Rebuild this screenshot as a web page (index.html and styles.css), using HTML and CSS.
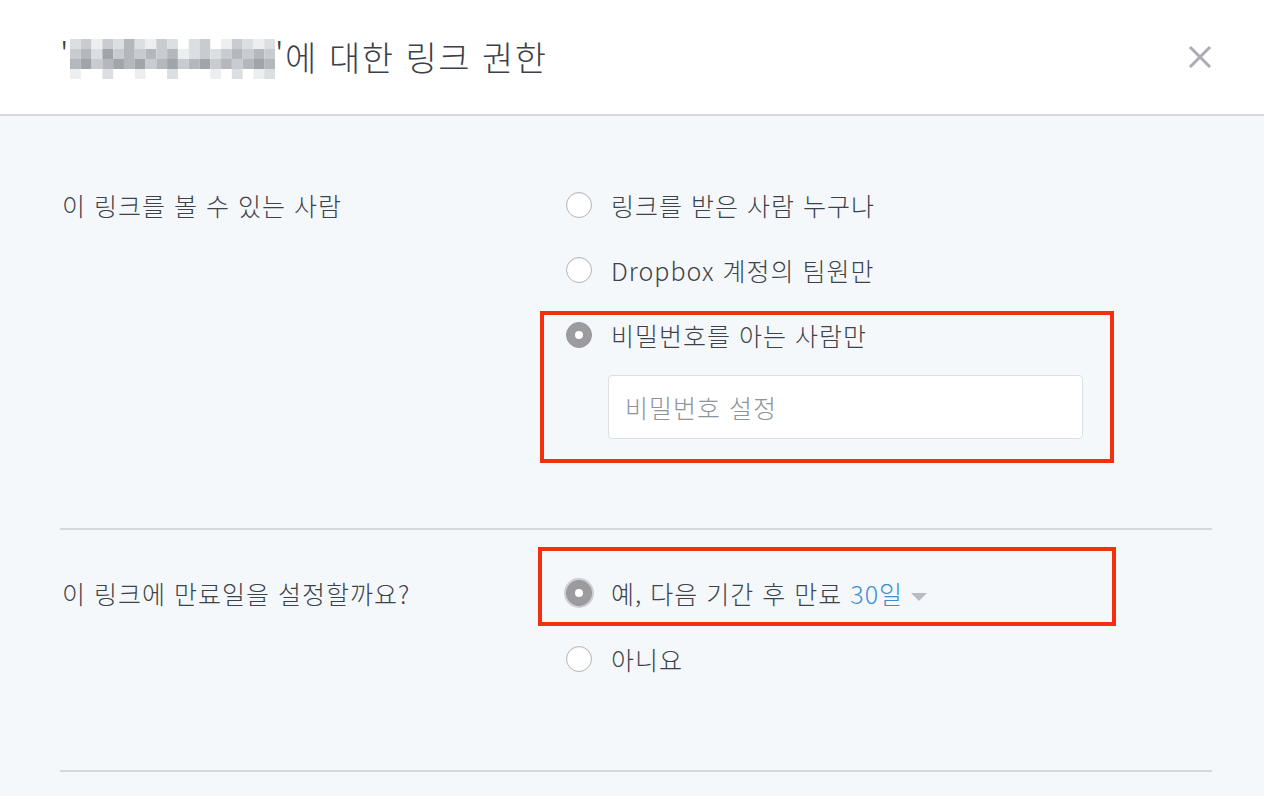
FILE: index.html
```html
<!DOCTYPE html>
<html lang="ko">
<head>
<meta charset="utf-8">
<title>링크 권한</title>
<link rel="stylesheet" href="styles.css">
</head>
<body>
<div class="modal">
  <header class="header">
    <h1 class="title">
      <span class="q">'</span><svg class="mosaic" width="205" height="40" viewBox="0 0 209 40" preserveAspectRatio="none" aria-hidden="true">
        <g>
          <rect x="0" y="0" width="11" height="10" fill="#dcdfe2"/><rect x="11" y="0" width="11" height="10" fill="#c8ccd0"/><rect x="22" y="0" width="11" height="10" fill="#eceef0"/><rect x="33" y="0" width="11" height="10" fill="#c8ccd0"/><rect x="44" y="0" width="11" height="10" fill="#dcdfe2"/><rect x="55" y="0" width="11" height="10" fill="#b4b8bd"/><rect x="66" y="0" width="11" height="10" fill="#dcdfe2"/><rect x="77" y="0" width="11" height="10" fill="#eceef0"/><rect x="88" y="0" width="11" height="10" fill="#c8ccd0"/><rect x="99" y="0" width="11" height="10" fill="#dcdfe2"/><rect x="121" y="0" width="11" height="10" fill="#dcdfe2"/><rect x="132" y="0" width="11" height="10" fill="#c8ccd0"/><rect x="154" y="0" width="11" height="10" fill="#eceef0"/><rect x="165" y="0" width="11" height="10" fill="#c8ccd0"/><rect x="176" y="0" width="11" height="10" fill="#dcdfe2"/><rect x="187" y="0" width="11" height="10" fill="#eceef0"/><rect x="198" y="0" width="11" height="10" fill="#dcdfe2"/>
        </g>
        <g>
          <rect x="0" y="10" width="11" height="10" fill="#c8ccd0"/><rect x="11" y="10" width="11" height="10" fill="#b4b8bd"/><rect x="22" y="10" width="11" height="10" fill="#dcdfe2"/><rect x="33" y="10" width="11" height="10" fill="#a0a5aa"/><rect x="44" y="10" width="11" height="10" fill="#c8ccd0"/><rect x="55" y="10" width="11" height="10" fill="#b4b8bd"/><rect x="66" y="10" width="11" height="10" fill="#c8ccd0"/><rect x="77" y="10" width="11" height="10" fill="#b4b8bd"/><rect x="88" y="10" width="11" height="10" fill="#c8ccd0"/><rect x="99" y="10" width="11" height="10" fill="#b4b8bd"/><rect x="110" y="10" width="11" height="10" fill="#eceef0"/><rect x="121" y="10" width="11" height="10" fill="#dcdfe2"/><rect x="132" y="10" width="11" height="10" fill="#c8ccd0"/><rect x="143" y="10" width="11" height="10" fill="#dcdfe2"/><rect x="154" y="10" width="11" height="10" fill="#c8ccd0"/><rect x="165" y="10" width="11" height="10" fill="#b4b8bd"/><rect x="176" y="10" width="11" height="10" fill="#c8ccd0"/><rect x="187" y="10" width="11" height="10" fill="#b4b8bd"/><rect x="198" y="10" width="11" height="10" fill="#c8ccd0"/>
        </g>
        <g>
          <rect x="0" y="20" width="11" height="10" fill="#b4b8bd"/><rect x="11" y="20" width="11" height="10" fill="#a0a5aa"/><rect x="22" y="20" width="11" height="10" fill="#c8ccd0"/><rect x="33" y="20" width="11" height="10" fill="#b4b8bd"/><rect x="44" y="20" width="11" height="10" fill="#a0a5aa"/><rect x="55" y="20" width="11" height="10" fill="#b4b8bd"/><rect x="66" y="20" width="11" height="10" fill="#a0a5aa"/><rect x="77" y="20" width="11" height="10" fill="#c8ccd0"/><rect x="88" y="20" width="11" height="10" fill="#b4b8bd"/><rect x="99" y="20" width="11" height="10" fill="#a0a5aa"/><rect x="110" y="20" width="11" height="10" fill="#c8ccd0"/><rect x="121" y="20" width="11" height="10" fill="#b4b8bd"/><rect x="132" y="20" width="11" height="10" fill="#a0a5aa"/><rect x="143" y="20" width="11" height="10" fill="#c8ccd0"/><rect x="154" y="20" width="11" height="10" fill="#b4b8bd"/><rect x="165" y="20" width="11" height="10" fill="#c8ccd0"/><rect x="176" y="20" width="11" height="10" fill="#b4b8bd"/><rect x="187" y="20" width="11" height="10" fill="#a0a5aa"/><rect x="198" y="20" width="11" height="10" fill="#b4b8bd"/>
        </g>
        <g>
          <rect x="0" y="30" width="11" height="10" fill="#eceef0"/><rect x="33" y="30" width="11" height="10" fill="#dcdfe2"/><rect x="66" y="30" width="11" height="10" fill="#eceef0"/><rect x="99" y="30" width="11" height="10" fill="#dcdfe2"/><rect x="143" y="30" width="11" height="10" fill="#eceef0"/><rect x="165" y="30" width="11" height="10" fill="#dcdfe2"/><rect x="187" y="30" width="11" height="10" fill="#eceef0"/><rect x="198" y="30" width="11" height="10" fill="#dcdfe2"/>
        </g>
      </svg><span class="q">'</span>에 대한 링크 권한
    </h1>
    <button class="close" type="button" aria-label="닫기">
      <svg width="24" height="24" viewBox="0 0 24 24"><path d="M2 2 L22 22 M22 2 L2 22" stroke="#a9adb3" stroke-width="3" fill="none"/></svg>
    </button>
  </header>

  <section class="section first">
    <div class="label">이 링크를 볼 수 있는 사람</div>
    <div class="options">
      <label class="option"><span class="radio"></span><span>링크를 받은 사람 누구나</span></label>
      <label class="option"><span class="radio"></span><span>Dropbox 계정의 팀원만</span></label>
      <div class="highlight hl-a">
        <label class="option"><span class="radio checked"></span><span>비밀번호를 아는 사람만</span></label>
        <input class="pw" type="text" placeholder="비밀번호 설정">
      </div>
    </div>
  </section>

  <section class="section second">
    <div class="label">이 링크에 만료일을 설정할까요?</div>
    <div class="options">
      <div class="highlight hl-b">
        <label class="option"><span class="radio checked ring"></span><span>예, 다음 기간 후 만료 <span class="blue">30일</span><span class="caret"></span></span></label>
      </div>
      <label class="option"><span class="radio"></span><span>아니요</span></label>
    </div>
  </section>
</div>
</body>
</html>
```

FILE: styles.css
```css
html, body {
  margin: 0;
  padding: 0;
  background: #f5f8fb;
}

body {
  font-family: "Noto Sans CJK KR", "Noto Sans", "Liberation Sans", sans-serif;
  font-weight: 300;
  color: #3c4249;
}

.modal {
  width: 1264px;
  min-height: 796px;
  background: #f5f8fb;
}

.header {
  height: 116px;
  box-sizing: border-box;
  background: #ffffff;
  border-bottom: 2px solid #d7d8e1;
  display: flex;
  align-items: center;
  justify-content: space-between;
  padding: 0 52px 0 60px;
}

.title {
  margin: 0;
  font-size: 34px;
  font-weight: 300;
  letter-spacing: 1.5px;
  line-height: 40px;
  color: #3b4148;
  display: flex;
  align-items: center;
}

.q {
  display: inline-block;
}

.mosaic {
  display: block;
  margin: 4px 0 0 0;
}

.close {
  border: 0;
  background: transparent;
  padding: 0;
  width: 24px;
  height: 24px;
  display: flex;
  cursor: pointer;
}

.section {
  display: grid;
  grid-template-columns: 506px 1fr;
  margin: 0 52px 0 60px;
  border-bottom: 2px solid #d5d9de;
  font-size: 25px;
  letter-spacing: 1px;
  line-height: 34px;
}

.first {
  padding: 72px 0 89px 0;
}

.second {
  padding: 46px 0 94px 0;
}

.label {
  padding-left: 2px;
}

.options {
  display: flex;
  flex-direction: column;
  gap: 31px;
}

.second .options {
  gap: 32px;
}

.option {
  display: flex;
  align-items: center;
  gap: 19px;
  height: 34px;
}

.radio {
  width: 26px;
  height: 26px;
  box-sizing: border-box;
  border-radius: 50%;
  border: 1px solid #b3b6ba;
  background: #ffffff;
  box-shadow: inset 0 1px 1px rgba(0,0,0,0.06);
  flex: none;
  display: flex;
  align-items: center;
  justify-content: center;
}

.radio.checked {
  background: #9c9ca0;
  border-color: #97979b;
  box-shadow: none;
}

.radio.checked::before {
  content: "";
  width: 8px;
  height: 8px;
  border-radius: 50%;
  background: #ffffff;
}

.radio.ring {
  box-shadow: 0 0 0 2px #cfcfd2;
}

.highlight {
  position: relative;
}

.highlight::after {
  content: "";
  position: absolute;
  border: 4px solid #f0300e;
  pointer-events: none;
}

.hl-a::after {
  top: -7px;
  left: -26px;
  right: 98px;
  bottom: -24px;
}

.hl-b::after {
  top: -29px;
  left: -28px;
  right: 96px;
  bottom: -16px;
}

.pw {
  display: block;
  margin: 23px 0 0 42px;
  width: 475px;
  height: 64px;
  box-sizing: border-box;
  border: 1px solid #dcdfe3;
  border-radius: 4px;
  background: #ffffff;
  padding: 0 16px;
  font-family: inherit;
  font-weight: 300;
  font-size: 25px;
  letter-spacing: 1px;
  color: #3c4249;
  outline: none;
}

.pw::placeholder {
  color: #8e949a;
}

.blue {
  color: #3a8fd4;
}

.caret {
  display: inline-block;
  width: 0;
  height: 0;
  margin-left: 8px;
  vertical-align: middle;
  border-left: 8px solid transparent;
  border-right: 8px solid transparent;
  border-top: 8px solid #b9bdc3;
}
```
